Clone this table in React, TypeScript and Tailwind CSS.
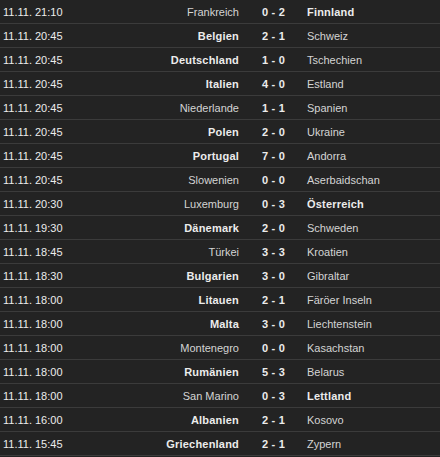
import React from "react";

type Match = { d: string; h: string; a: string; s: string; w: "h" | "a" | "" };

const matches: Match[] = [
  { d: "11.11. 21:10", h: "Frankreich", s: "0 - 2", a: "Finnland", w: "a" },
  { d: "11.11. 20:45", h: "Belgien", s: "2 - 1", a: "Schweiz", w: "h" },
  { d: "11.11. 20:45", h: "Deutschland", s: "1 - 0", a: "Tschechien", w: "h" },
  { d: "11.11. 20:45", h: "Italien", s: "4 - 0", a: "Estland", w: "h" },
  { d: "11.11. 20:45", h: "Niederlande", s: "1 - 1", a: "Spanien", w: "" },
  { d: "11.11. 20:45", h: "Polen", s: "2 - 0", a: "Ukraine", w: "h" },
  { d: "11.11. 20:45", h: "Portugal", s: "7 - 0", a: "Andorra", w: "h" },
  { d: "11.11. 20:45", h: "Slowenien", s: "0 - 0", a: "Aserbaidschan", w: "" },
  { d: "11.11. 20:30", h: "Luxemburg", s: "0 - 3", a: "Österreich", w: "a" },
  { d: "11.11. 19:30", h: "Dänemark", s: "2 - 0", a: "Schweden", w: "h" },
  { d: "11.11. 18:45", h: "Türkei", s: "3 - 3", a: "Kroatien", w: "" },
  { d: "11.11. 18:30", h: "Bulgarien", s: "3 - 0", a: "Gibraltar", w: "h" },
  { d: "11.11. 18:00", h: "Litauen", s: "2 - 1", a: "Färöer Inseln", w: "h" },
  { d: "11.11. 18:00", h: "Malta", s: "3 - 0", a: "Liechtenstein", w: "h" },
  { d: "11.11. 18:00", h: "Montenegro", s: "0 - 0", a: "Kasachstan", w: "" },
  { d: "11.11. 18:00", h: "Rumänien", s: "5 - 3", a: "Belarus", w: "h" },
  { d: "11.11. 18:00", h: "San Marino", s: "0 - 3", a: "Lettland", w: "a" },
  { d: "11.11. 16:00", h: "Albanien", s: "2 - 1", a: "Kosovo", w: "h" },
  { d: "11.11. 15:45", h: "Griechenland", s: "2 - 1", a: "Zypern", w: "h" },
];

export default function App() {
  return (
    <div
      className="w-[440px] h-[457px] bg-[#232323] text-[11px] text-[#d4d4d4]"
      style={{ fontFamily: '"Liberation Sans", Arial, sans-serif' }}
    >
      {matches.map((m, i) => (
        <div
          key={i}
          className="flex items-center h-[24px] border-b border-[#3b3b3b] leading-none"
        >
          <div className="w-[120px] pl-[3px] text-[#ececec] pt-[1px]">{m.d}</div>
          <div
            className={
              "w-[119px] text-right pt-[1px] " +
              (m.w === "h" ? "font-bold text-[#ececec] tracking-[0.2px]" : "")
            }
          >
            {m.h}
          </div>
          <div className="w-[68px] pl-[23px] font-bold text-[#ececec] pt-[1px] tracking-[0.2px]">{m.s}</div>
          <div
            className={
              "flex-1 pt-[1px] " +
              (m.w === "a" ? "font-bold text-[#ececec] tracking-[0.2px]" : "")
            }
          >
            {m.a}
          </div>
        </div>
      ))}
    </div>
  );
}
